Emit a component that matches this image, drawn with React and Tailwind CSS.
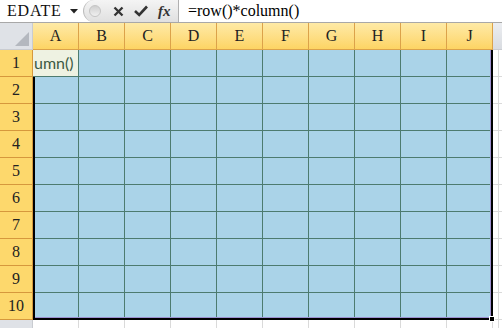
import React from "react";

const cols = ["A", "B", "C", "D", "E", "F", "G", "H", "I", "J"];
const rows = [1, 2, 3, 4, 5, 6, 7, 8, 9, 10];

function XIcon() {
  return (
    <svg width="11" height="11" viewBox="0 0 11 11">
      <path d="M1.5 1.5 L9.5 9.5 M9.5 1.5 L1.5 9.5" stroke="#333" strokeWidth="2.3" strokeLinecap="butt" />
    </svg>
  );
}

function CheckIcon() {
  return (
    <svg width="14" height="12" viewBox="0 0 14 12">
      <path d="M1 6 L5.2 10 L13 1.5" stroke="#333" strokeWidth="2.6" fill="none" strokeLinejoin="miter" />
    </svg>
  );
}

export default function App() {
  return (
    <div className="relative w-[502px] h-[328px] overflow-hidden bg-white">
      {/* Formula bar */}
      <div className="flex h-[23px] border-b border-[#a8a8a8] bg-white">
        <div className="flex w-[83px] items-center pl-[7px] pr-[5px]">
          <span className="flex-1 text-[16px] leading-none text-[#111] [font-family:'Liberation_Serif',serif] tracking-[0.8px]">
            EDATE
          </span>
          <svg width="8" height="5" viewBox="0 0 8 5" className="mt-[1px]">
            <path d="M0 0 L8 0 L4 4.5 Z" fill="#222" />
          </svg>
        </div>
        <div className="flex w-[96px] items-center rounded-l-full border-l border-r border-l-[#bdbdbd] border-r-[#b0b0b0] bg-gradient-to-b from-[#f4f4f4] to-[#e0e0e0]">
          <div className="ml-[5px] h-[12px] w-[12px] rounded-full bg-gradient-to-b from-[#cfcfcf] to-[#f0f0f0] border border-[#c4c4c4]" />
          <div className="ml-[12px] flex items-center">
            <XIcon />
          </div>
          <div className="ml-[10px] flex items-center">
            <CheckIcon />
          </div>
          <span className="ml-[10px] text-[15px] italic font-bold leading-none text-[#333] [font-family:'Liberation_Serif',serif]">
            fx
          </span>
        </div>
        <div className="flex flex-1 items-center pl-[9px] text-[16px] leading-none text-black [font-family:'Liberation_Serif',serif]">
          =row()*column()
        </div>
      </div>

      {/* Grid */}
      <div className="grid grid-cols-[33px_repeat(10,46px)_9px] grid-rows-[27px_repeat(10,27px)_8px] [font-family:'Liberation_Serif',serif]">
        {/* corner */}
        <div className="relative border-r border-b border-[#c9ccd1] bg-[#dfe2e7]">
          <svg width="14" height="14" viewBox="0 0 14 14" className="absolute right-[3px] bottom-[3px]">
            <path d="M14 0 L14 14 L0 14 Z" fill="#b4b8bf" />
          </svg>
        </div>
        {cols.map((c) => (
          <div
            key={c}
            className="flex items-center justify-center border-r border-b border-[#dca24a] bg-gradient-to-b from-[#feeaa6] to-[#fdd463] text-[16px] text-[#222]"
          >
            {c}
          </div>
        ))}
        <div className="border-b border-[#c9ccd1] bg-gradient-to-b from-[#eceef1] to-[#d9dce1]" />

        {rows.map((r) => (
          <React.Fragment key={r}>
            <div className="flex items-center justify-center border-r border-b border-[#d6983c] bg-[#fdd86c] text-[16px] text-[#222]">
              {r}
            </div>
            {cols.map((c) =>
              r === 1 && c === "A" ? (
                <div
                  key={c}
                  className="flex items-center overflow-hidden border-r border-b border-[#4d7b6f] bg-[#eef2e2] pl-[1px] text-[16px] text-[#3c5a44] [font-family:Lato,'Liberation_Sans',sans-serif]"
                >
                  umn()
                </div>
              ) : (
                <div key={c} className="border-r border-b border-[#4d7b6f] bg-[#aad3e8]" />
              )
            )}
            <div className="border-b border-[#dadada] bg-white">
              <div className="h-full w-[6px] border-r border-[#dadada]" />
            </div>
          </React.Fragment>
        ))}

        {/* row 11 partial */}
        <div className="border-r border-[#c9ccd1] bg-[#dfe2e7]" />
        {cols.map((c) => (
          <div key={c} className="border-r border-[#dadada] bg-white" />
        ))}
        <div className="bg-white">
          <div className="h-full w-[6px] border-r border-[#dadada]" />
        </div>
      </div>

      {/* Selection overlay */}
      <div className="absolute left-[33px] top-[77px] h-[243px] w-[2px] bg-black" />
      <div className="absolute left-[33px] top-[318px] h-[2px] w-[460px] bg-black" />
      <div className="absolute left-[491px] top-[50px] h-[270px] w-[2px] bg-black" />
      <div className="absolute left-[490px] top-[50px] h-[268px] w-[1px] bg-[#9c8fcf]" />
      <div className="absolute left-[35px] top-[317px] h-[1px] w-[456px] bg-[#9c8fcf]" />
      <div className="absolute left-[489px] top-[316px] h-[6px] w-[6px] border border-white bg-black" />
    </div>
  );
}
